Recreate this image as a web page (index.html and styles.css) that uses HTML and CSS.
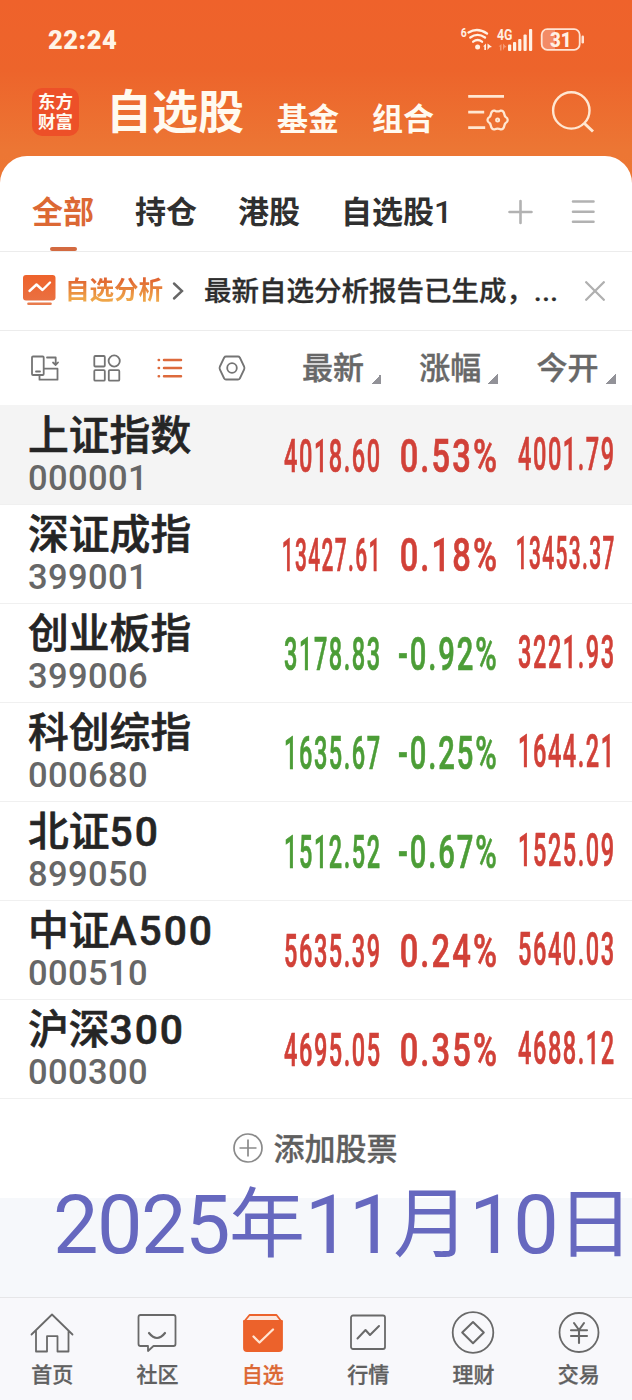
FILE: index.html
```html
<!DOCTYPE html>
<html lang="zh-CN">
<head>
<meta charset="utf-8">
<title>自选股</title>
<link rel="stylesheet" href="styles.css">
</head>
<body>
<div class="app">
  <header class="top">
    <div class="status">
      <span class="clock">22:24</span>
      <svg class="status-icons" width="128" height="28" viewBox="0 0 128 28">
        <g fill="none" stroke="#fff0e4" stroke-width="2.3" stroke-linecap="round">
          <path d="M9.500 6.500q9-5.500 18.500 1M11.300 11.500q7.200-5.200 14.700 0M14.200 15.700q4.400-3.300 8.800 0"/>
        </g>
        <circle cx="18.600" cy="21" r="2.500" fill="#fff0e4"/>
        <path d="M24 20.500l3-3v6.500h-1.700v-3.500zM28.500 17.500l4.500 3.500-2.500.5-2 2.500z" fill="#fff0e4"/>
        <text class="gen" x="1.800" y="10.500" textLength="6" lengthAdjust="spacingAndGlyphs">6</text>
        <text class="net" x="38" y="13.500" textLength="15.500" lengthAdjust="spacingAndGlyphs">4G</text>
        <path d="M39.500 20.500l3-2.500v6.500h-1.500v-4zM44 17.500l3.500 3.500-2 .5-1.500 3z" fill="#f69a75"/>
        <g fill="#fff0e4">
          <rect x="49" y="18.500" width="3.200" height="6.500" rx="1"/><rect x="54" y="16" width="3.200" height="9" rx="1"/><rect x="59.200" y="13" width="3.200" height="12" rx="1"/><rect x="64.500" y="8.500" width="3.200" height="16.500" rx="1"/><rect x="70" y="3" width="3.200" height="22" rx="1"/>
        </g>
        <path d="M88 4h8v20h-8q-5-1-5-6V9q0-4 5-5z" fill="#f38b66"/>
        <rect x="82.700" y="3.200" width="38" height="20.600" rx="5.500" fill="none" stroke="#ffe4d4" stroke-width="1.800"/>
        <rect x="122.500" y="9.500" width="2.500" height="8" rx="1.200" fill="#ffe4d4"/>
        <text class="batt" x="91" y="20.700" textLength="21.500" lengthAdjust="spacingAndGlyphs">31</text>
      </svg>
    </div>
    <div class="nav">
      <div class="logo"><span>东方</span><span>财富</span></div>
      <span class="nav-main">自选股</span>
      <span class="nav-item nav-fund">基金</span>
      <span class="nav-item">组合</span>
      <svg class="nav-filter" width="44" height="44" viewBox="0 0 44 44" fill="none" stroke="#ffe7d2" stroke-width="2.800">
        <path d="M1.200 6.300h35.800M1.200 22.200h16M1.200 37.600h17"/>
        <path d="M20.500 30q0-2 2-3 1-.7 1.300-2.500.8-4.500 4-3.800 2.800 1.500 5.600 0 3.200-.7 4 3.800.3 1.800 1.300 2.500 2 1 2 3t-2 3q-1 .7-1.300 2.500-.8 4.500-4 3.800-2.800-1.500-5.600 0-3.200.7-4-3.800-.3-1.800-1.300-2.500-2-1-2-3z" stroke-width="2.300"/>
        <circle cx="30.600" cy="30" r="1.500" stroke-width="2"/>
      </svg>
      <svg class="nav-search" width="44" height="44" viewBox="0 0 44 44" fill="none" stroke="#ffe7d2" stroke-width="2.400">
        <circle cx="20.300" cy="20.400" r="18.200"/><path d="M33 33l9 8.500" stroke-width="3"/>
      </svg>
    </div>
  </header>
  <main class="card">
    <nav class="tabs">
      <span class="tab active">全部</span><span class="tab">持仓</span><span class="tab">港股</span><span class="tab">自选股<span class="lat">1</span></span>
      <svg class="tab-tools" width="90" height="30" viewBox="0 0 90 30" fill="none" stroke="#b2b2b2" stroke-width="2.600" stroke-linecap="round">
        <path d="M3.500 15h22M14.500 4v22M67 4.500h20.500M67 14.700h20.500M67 24.700h20.500"/>
      </svg>
    </nav>
    <section class="notice">
      <svg width="34" height="32" viewBox="0 0 34 32">
        <defs><linearGradient id="badge" x2="0" y2="1"><stop stop-color="#ee632c"/><stop offset="1" stop-color="#ea7041"/></linearGradient></defs>
        <rect x="1" y="1" width="32.500" height="25.500" rx="3" fill="url(#badge)"/>
        <path d="M7.500 17l7-6.500 6 5.500 7.500-7.500" fill="none" stroke="#fff" stroke-width="2.400" stroke-linecap="round" stroke-linejoin="round"/>
        <path d="M6.500 29.700h22" stroke="#e87b4c" stroke-width="2.600" stroke-linecap="round"/>
      </svg>
      <span class="notice-title">自选分析</span>
      <svg class="chev" width="12" height="20" viewBox="0 0 12 20" fill="none" stroke="#666" stroke-width="2.400" stroke-linecap="round"><path d="M2 2.500l8 7.500-8 7.500"/></svg>
      <span class="notice-text">最新自选分析报告已生成，<span class="dots">...</span></span>
      <svg class="close" width="20" height="20" viewBox="0 0 20 20" stroke="#b0b0b0" stroke-width="2.300" stroke-linecap="round"><path d="M1.200 1.200l17.600 17.600M18.800 1.200L1.200 18.800"/></svg>
    </section>
    <section class="cols">
      <svg class="views" width="218" height="28" viewBox="0 0 218 28" fill="none" stroke="#747474" stroke-width="1.800" stroke-linecap="round" stroke-linejoin="round">
        <rect x="3" y="2.500" width="11.700" height="18.500" rx="1"/>
        <path d="M7 17.500h4M18 3.500h8.700v6M24 8.500l2.700 2.500 2.300-2.500M15 14.700h13.500v11h-18v-4.500"/>
        <rect x="65.300" y="2" width="10.500" height="10.500" rx="1"/><circle cx="85.200" cy="7" r="5.600"/><rect x="65.300" y="16.200" width="10.500" height="10.500" rx="1"/><rect x="79.800" y="16.200" width="10.500" height="10.500" rx="1"/>
        <g stroke="#dd6a3c" stroke-width="2.500"><path d="M135 6h17M135 14h17M135 22.300h17"/><path d="M129.700 6h.3M129.700 14h.3M129.700 22.300h.3"/></g>
        <path d="M197 2.500h12q1.200 0 1.800 1l4.300 9q.7 1.500 0 3l-4.300 9q-.6 1-1.800 1h-12q-1.200 0-1.800-1l-4.300-9q-.7-1.500 0-3l4.300-9q.6-1 1.800-1z"/><circle cx="203" cy="14" r="4.800"/>
      </svg>
      <span class="col">最新<i></i></span><span class="col">涨幅<i></i></span><span class="col">今开<i></i></span>
    </section>
    <section class="list">
      <div class="row hot"><div class="stock"><b>上证指数</b><em>000001</em></div><span class="num up"><s class="n7">4018.60</s></span><span class="num up"><s class="pct">0.53%</s></span><span class="num open up"><s class="n7">4001.79</s></span></div>
      <div class="row"><div class="stock"><b>深证成指</b><em>399001</em></div><span class="num up"><s class="n8">13427.61</s></span><span class="num up"><s class="pct">0.18%</s></span><span class="num open up"><s class="n8">13453.37</s></span></div>
      <div class="row"><div class="stock"><b>创业板指</b><em>399006</em></div><span class="num down"><s class="n7">3178.83</s></span><span class="num down"><s class="neg">-0.92%</s></span><span class="num open up"><s class="n7">3221.93</s></span></div>
      <div class="row"><div class="stock"><b>科创综指</b><em>000680</em></div><span class="num down"><s class="n7">1635.67</s></span><span class="num down"><s class="neg">-0.25%</s></span><span class="num open up"><s class="n7">1644.21</s></span></div>
      <div class="row"><div class="stock"><b>北证<span class="lat">50</span></b><em>899050</em></div><span class="num down"><s class="n7">1512.52</s></span><span class="num down"><s class="neg">-0.67%</s></span><span class="num open up"><s class="n7">1525.09</s></span></div>
      <div class="row"><div class="stock"><b>中证<span class="lat">A500</span></b><em>000510</em></div><span class="num up"><s class="n7">5635.39</s></span><span class="num up"><s class="pct">0.24%</s></span><span class="num open up"><s class="n7">5640.03</s></span></div>
      <div class="row"><div class="stock"><b>沪深<span class="lat">300</span></b><em>000300</em></div><span class="num up"><s class="n7">4695.05</s></span><span class="num up"><s class="pct">0.35%</s></span><span class="num open up"><s class="n7">4688.12</s></span></div>
    </section>
    <div class="add">
      <svg width="32" height="32" viewBox="0 0 32 32" fill="none" stroke="#8a8a8a" stroke-width="1.700"><circle cx="16" cy="16" r="14"/><path d="M7.500 16h17M16 7.500v17"/></svg>
      <span>添加股票</span>
    </div>
  </main>
  <div class="date"><span>2025</span>年<span>11</span>月<span>10</span>日</div>
  <footer class="bar">
    <div class="item"><svg width="46" height="46" viewBox="0 0 46 46"><path d="M2.500 24.500L23 4.500l20.500 20M7 20.500v21h11V26.200h10.500v15.300h11v-21"/></svg><span>首页</span></div>
    <div class="item"><svg width="46" height="46" viewBox="0 0 46 46"><path d="M6.500 5h33q2 0 2 2v27q0 2-2 2H19.500L14 41v-5H6.500q-2 0-2-2V7q0-2 2-2z"/><path d="M15 23q8 10 16 0" stroke-width="2.200"/></svg><span>社区</span></div>
    <div class="item on"><svg width="46" height="46" viewBox="0 0 46 46"><path d="M9.500 5h27l5 6.500H4.200z" fill="#fbe7de"/><path d="M4 11h38v27q0 3-3 3H7q-3 0-3-3z" fill="#ec622b" /><path d="M13.500 26.500l6 6L33 19.500" class="tick"/></svg><span>自选</span></div>
    <div class="item"><svg width="46" height="46" viewBox="0 0 46 46"><rect x="6" y="5.500" width="34" height="33.500" rx="2"/><path d="M12.500 28.500l8-8.500 4.500 5 9-9" stroke-width="2"/></svg><span>行情</span></div>
    <div class="item"><svg width="46" height="46" viewBox="0 0 46 46"><circle cx="23" cy="22.500" r="20.300"/><path d="M23 12l10.800 10.500L23 33.300 12.200 22.500z" stroke-width="2"/></svg><span>理财</span></div>
    <div class="item"><svg width="46" height="46" viewBox="0 0 46 46"><circle cx="23" cy="22.500" r="19.500"/><path d="M18 13l5 7 5-7M15 20.300h16M15 26h16M23 20v13" stroke-width="2.100"/></svg><span>交易</span></div>
  </footer>
</div>
</body>
</html>
```
FILE: styles.css
```css
* { box-sizing: border-box; }
body { margin: 0; background: #f7f8fb; font-family: "Noto Sans CJK SC", sans-serif; font-weight: 500; }
svg { display: block; flex: none; }
.app { width: 632px; height: 1400px; overflow: hidden; display: flex; flex-direction: column; white-space: nowrap; background: linear-gradient(#ef622b 0, #ed642b 70px, #ec7634 150px, #ed7733 190px, #f6f8fb 191px); }

.top { height: 156px; flex: none; }
.status { height: 80px; padding: 26px 45px 0 48px; display: flex; justify-content: space-between; align-items: flex-start; }
.clock { font: 900 25.500px/29px Roboto, sans-serif; color: #fff4e6; letter-spacing: .5px; }
.status-icons text { font-family: Roboto, sans-serif; font-weight: 700; fill: #fff0e4; }
.status-icons .gen { font-size: 12px; }
.status-icons .net { font-size: 15px; }
.status-icons .batt { font-size: 20.500px; font-weight: 900; }
.nav { height: 76px; padding-left: 32px; display: flex; align-items: flex-start; color: #fffaf0; }
.logo { width: 47px; height: 48px; margin-top: 8px; border-radius: 10px; background: #ed5028; display: flex; flex-direction: column; align-items: center; padding-top: 3px; font-size: 17.500px; line-height: 20px; font-weight: 700; }
.nav-main { font-size: 46px; line-height: 60px; margin: -2px 0 0 27px; font-weight: 700; }
.nav-item { font-size: 31px; line-height: 40px; margin: 17px 0 0 33px; font-weight: 700; }
.nav-filter { margin: 10px 0 0 33px; }
.nav-search { margin: 10px 0 0 40px; }

.card { height: 1042px; flex: none; background: #fff; border-radius: 27px 27px 0 0; }
.tabs { height: 96px; padding: 0 0 0 32px; display: flex; align-items: flex-start; border-bottom: 1px solid #ececec; gap: 41px; font-size: 31px; line-height: 46px; color: #303030; }
.tab { margin-top: 31px; font-weight: 700; }
.tab .lat { font-size: 32px; }
.lat { font-family: Roboto, sans-serif; font-weight: 500; letter-spacing: 1px; }
.active { color: #dc6834; }
.active::after { content: ""; display: block; width: 27px; height: 4px; margin: 14px auto 0; border-radius: 2px; background: #d36a40; }
.tab-tools { margin: 41px 0 0 12px; }
.notice { height: 79px; padding: 0 27px 0 22px; display: flex; align-items: center; border-bottom: 1px solid #ececec; }
.notice > svg:first-child { margin-top: -3px; }
.notice-title { margin: -5px 0 0 9px; font-size: 24.500px; font-weight: 700; background: linear-gradient(#e06632 25%, #efa548 80%); -webkit-background-clip: text; background-clip: text; color: transparent; }
.chev { margin-left: 9px; }
.notice-text { margin: -4px 0 0 20px; width: 354px; font-size: 27.500px; color: #2d2d2d; -webkit-text-stroke: .3px; }
.dots { font-family: Roboto, sans-serif; letter-spacing: .5px; }
.close { margin-left: auto; }
.cols { height: 74px; padding-left: 29px; display: flex; align-items: center; color: #686868; }
.views { margin-right: 55px; }
.col { width: 117.300px; flex: none; display: flex; align-items: center; gap: 7px; margin-top: -5px; font-size: 31px; line-height: 46px; -webkit-text-stroke: .4px; }
.col i { width: 10px; height: 10px; margin-top: 26px; background: linear-gradient(135deg, transparent 50%, #929298 50%); }

.row { height: 99px; padding: 0 17px 0 28px; display: flex; gap: 20px; border-bottom: 1px solid #f0f0f0; }
.hot { height: 100px; margin-bottom: -1px; background: #f4f4f4; }
.row + .row { height: 100px; margin-bottom: -1px; }
.stock { flex: 1; display: flex; flex-direction: column; }
.stock b { font-size: 40.800px; line-height: 48px; height: 48px; margin: 4px 0 3px; font-weight: 500; color: #252525; -webkit-text-stroke: .6px; }
.stock .lat { letter-spacing: 1.900px; }
.stock em { font: 500 34.500px/36px Roboto, sans-serif; letter-spacing: .4px; color: #676767; }
.num { width: 97px; display: flex; justify-content: flex-end; margin-top: 24px; font: 500 46px/54px Roboto, sans-serif; }
.num s { text-decoration: none; transform-origin: right center; letter-spacing: 3px; margin-right: -1px; -webkit-text-stroke: .7px; }
.open { margin-top: 22px; }
.up { color: #d14138; }
.down { color: #4c9d37; }
.n7 { transform: scaleX(.512); }
.n8 { transform: scaleX(.455); }
.pct { transform: scaleX(.71); }
.neg { transform: scaleX(.635); }

.add { height: 100px; padding: 1px 3px 0 0; display: flex; align-items: center; justify-content: center; gap: 10px; font-size: 31px; color: #5f5f5f; }
.add span { margin-top: -5px; -webkit-text-stroke: .3px; }
.add svg { margin-top: -2px; }
.date { height: 99px; padding: 1px 0 0 53px; flex: none; font-size: 76px; line-height: 38px; font-weight: 400; color: #6668bf; }
.date span { font-family: Roboto, sans-serif; font-size: 81px; letter-spacing: -1.500px; vertical-align: -2px; }
.bar { height: 103px; flex: none; display: grid; grid-template-columns: repeat(6, 1fr); padding-top: 12px; border-top: 1px solid #e6e6e8; background: #f8f8fb; }
.item { display: flex; flex-direction: column; align-items: center; padding-right: 1px; color: #606060; font-size: 21px; line-height: 34px; font-weight: 500; -webkit-text-stroke: .3px; }
.item svg { fill: none; stroke: #696969; stroke-width: 1.800; stroke-linejoin: round; stroke-linecap: round; }
.on { color: #dc6834; }
.on svg { stroke: #ec622b; }
.on .tick { stroke: #ffe4d2; stroke-width: 2.300; }
```
